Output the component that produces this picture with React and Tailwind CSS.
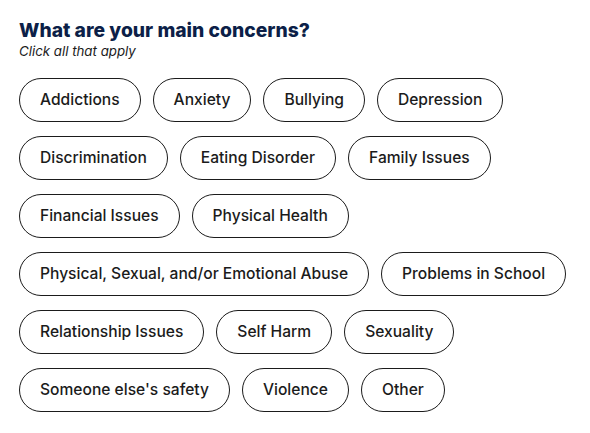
import React, { useState } from 'react';

const concerns = [
  'Addictions',
  'Anxiety',
  'Bullying',
  'Depression',
  'Discrimination',
  'Eating Disorder',
  'Family Issues',
  'Financial Issues',
  'Physical Health',
  'Physical, Sexual, and/or Emotional Abuse',
  'Problems in School',
  'Relationship Issues',
  'Self Harm',
  'Sexuality',
  "Someone else's safety",
  'Violence',
  'Other',
];

function ConcernChip({ label, selected, onToggle }) {
  return (
    <button
      type="button"
      onClick={onToggle}
      className={`h-[44px] px-[20px] rounded-full border text-[15.6px] font-medium leading-none whitespace-nowrap ${selected ? 'bg-[#162e51] border-[#162e51] text-white' : 'bg-white border-[#1b1b1b] text-[#1b1b1b]'}`}>
      {label}
    </button>
  );
}

export default function App() {
  const [selected, setSelected] = useState([]);

  function toggle(label) {
    if (selected.includes(label)) {
      setSelected(selected.filter(s => s !== label));
    } else {
      setSelected([...selected, label]);
    }
  }

  return (
    <div className="w-[590px] min-h-[433px] bg-white px-[19px] pt-[18px] font-['Inter',sans-serif]">
      <h2 className="text-[19.3px] font-extrabold leading-[25px] text-[#0c1f48]">What are your main concerns?</h2>
      <p className="text-[13.3px] italic leading-[17px] text-[#1b1b1b]">Click all that apply</p>
      <div className="mt-[18px] flex flex-wrap gap-x-[12px] gap-y-[14px]">
        {concerns.map(c =>
          <ConcernChip key={c} label={c} selected={selected.includes(c)} onToggle={() => toggle(c)} />
        )}
      </div>
    </div>
  );
}
